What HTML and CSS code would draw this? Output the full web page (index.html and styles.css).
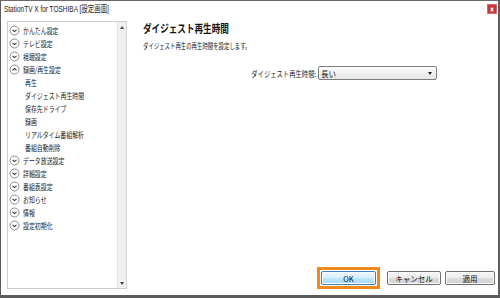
FILE: index.html
```html
<!DOCTYPE html>
<html lang="ja">
<head>
<meta charset="utf-8">
<link rel="stylesheet" href="styles.css">
</head>
<body>
<div class="window">
  <div class="titlebar">
    <span class="title">StationTV X for TOSHIBA [設定画面]</span>
    <span class="close"><svg width="9" height="9" viewBox="0 0 9 9"><path d="M2.5 2.5h4v1h-1v2h1v1h-4v-1h1v-2h-1z" fill="#fff"/></svg></span>
  </div>
  <div class="body">
    <div class="tree">
      <ul class="items">
        <li class="item"><svg class="ico" width="11" height="11" viewBox="0 0 11 11"><circle cx="5.5" cy="5.5" r="4.5" fill="#fff" stroke="#8a8a8a"/><path d="M3.5 4.8l2 1.8 2-1.8" fill="none" stroke="#333" stroke-width="1.1"/></svg><span class="t">かんたん設定</span></li>
        <li class="item"><svg class="ico" width="11" height="11" viewBox="0 0 11 11"><circle cx="5.5" cy="5.5" r="4.5" fill="#fff" stroke="#8a8a8a"/><path d="M3.5 4.8l2 1.8 2-1.8" fill="none" stroke="#333" stroke-width="1.1"/></svg><span class="t">テレビ設定</span></li>
        <li class="item"><svg class="ico" width="11" height="11" viewBox="0 0 11 11"><circle cx="5.5" cy="5.5" r="4.5" fill="#fff" stroke="#8a8a8a"/><path d="M3.5 4.8l2 1.8 2-1.8" fill="none" stroke="#333" stroke-width="1.1"/></svg><span class="t">視聴設定</span></li>
        <li class="item"><svg class="ico" width="11" height="11" viewBox="0 0 11 11"><circle cx="5.5" cy="5.5" r="4.5" fill="#fff" stroke="#8a8a8a"/><path d="M3.5 6.4l2-1.8 2 1.8" fill="none" stroke="#333" stroke-width="1.1"/></svg><span class="t">録画/再生設定</span></li>
        <li class="sub"><span class="t">再生</span></li>
        <li class="sub"><span class="t">ダイジェスト再生時間</span></li>
        <li class="sub"><span class="t">保存先ドライブ</span></li>
        <li class="sub"><span class="t">録画</span></li>
        <li class="sub"><span class="t">リアルタイム番組解析</span></li>
        <li class="sub"><span class="t">番組自動削除</span></li>
        <li class="item"><svg class="ico" width="11" height="11" viewBox="0 0 11 11"><circle cx="5.5" cy="5.5" r="4.5" fill="#fff" stroke="#8a8a8a"/><path d="M3.5 4.8l2 1.8 2-1.8" fill="none" stroke="#333" stroke-width="1.1"/></svg><span class="t">データ放送設定</span></li>
        <li class="item"><svg class="ico" width="11" height="11" viewBox="0 0 11 11"><circle cx="5.5" cy="5.5" r="4.5" fill="#fff" stroke="#8a8a8a"/><path d="M3.5 4.8l2 1.8 2-1.8" fill="none" stroke="#333" stroke-width="1.1"/></svg><span class="t">詳細設定</span></li>
        <li class="item"><svg class="ico" width="11" height="11" viewBox="0 0 11 11"><circle cx="5.5" cy="5.5" r="4.5" fill="#fff" stroke="#8a8a8a"/><path d="M3.5 4.8l2 1.8 2-1.8" fill="none" stroke="#333" stroke-width="1.1"/></svg><span class="t">番組表設定</span></li>
        <li class="item"><svg class="ico" width="11" height="11" viewBox="0 0 11 11"><circle cx="5.5" cy="5.5" r="4.5" fill="#fff" stroke="#8a8a8a"/><path d="M3.5 4.8l2 1.8 2-1.8" fill="none" stroke="#333" stroke-width="1.1"/></svg><span class="t">お知らせ</span></li>
        <li class="item"><svg class="ico" width="11" height="11" viewBox="0 0 11 11"><circle cx="5.5" cy="5.5" r="4.5" fill="#fff" stroke="#8a8a8a"/><path d="M3.5 4.8l2 1.8 2-1.8" fill="none" stroke="#333" stroke-width="1.1"/></svg><span class="t">情報</span></li>
        <li class="item"><svg class="ico" width="11" height="11" viewBox="0 0 11 11"><circle cx="5.5" cy="5.5" r="4.5" fill="#fff" stroke="#8a8a8a"/><path d="M3.5 4.8l2 1.8 2-1.8" fill="none" stroke="#333" stroke-width="1.1"/></svg><span class="t">設定初期化</span></li>
      </ul>
      <div class="scrollbar">
        <span class="arrow-up"></span>
        <span class="arrow-down"></span>
      </div>
    </div>
    <div class="main">
      <h1 class="heading"><span class="t">ダイジェスト再生時間</span></h1>
      <p class="desc"><span class="t">ダイジェスト再生の再生時間を設定します。</span></p>
      <div class="field">
        <span class="label">ダイジェスト再生時間:</span>
        <div class="select"><span>長い</span><span class="caret"></span></div>
      </div>
      <div class="buttons">
        <div class="focus"><div class="btn btn-ok">OK</div></div>
        <div class="btn btn-cancel">キャンセル</div>
        <div class="btn btn-apply">適用</div>
      </div>
    </div>
  </div>
</div>
</body>
</html>
```

FILE: styles.css
```css
* { box-sizing: border-box; }
html, body { margin: 0; padding: 0; }
body {
  font-family: "Noto Sans CJK JP", "Noto Sans", sans-serif;
  color: #111;
  background: #fff;
}
.t {
  display: inline-block;
  white-space: nowrap;
  transform-origin: left center;
}
.window {
  width: 500px;
  height: 298px;
  border-left: 1px solid #5c5c5c;
  border-top: 1px solid #6a6a6a;
  border-right: 2px solid #5c5c5c;
  border-bottom: 3px solid #5c5c5c;
  display: flex;
  flex-direction: column;
  background: #fff;
}
.titlebar {
  height: 19px;
  display: flex;
  align-items: flex-start;
  justify-content: space-between;
  padding: 1px 1px 0 3px;
}
.title {
  display: inline-block;
  white-space: nowrap;
  font-family: "Liberation Sans", "Noto Sans CJK JP", sans-serif;
  font-size: 9px;
  line-height: 14px;
  color: #222;
  transform: scaleX(0.72);
  transform-origin: left center;
}
.close {
  width: 10px;
  height: 10px;
  margin-top: 2px;
  background: #c9363a;
  border: 1px solid #d96a6d;
  display: flex;
  align-items: center;
  justify-content: center;
}
.close svg { display: block; }
.body {
  flex: 1;
  display: flex;
  padding: 1px 0 6px 6px;
  min-height: 0;
}
.tree {
  width: 120px;
  border: 1px solid #cdcdcd;
  border-right-color: #d6d6d6;
  display: flex;
  background: #fff;
}
.items {
  list-style: none;
  margin: 0;
  padding: 2px 0 0 0;
  flex: 1;
}
.item, .sub {
  height: 13px;
  font-size: 8px;
  line-height: 13px;
  display: flex;
  align-items: center;
  white-space: nowrap;
  color: #1a1a1a;
}
.item .t, .sub .t {
  transform: scaleX(0.74);
}
.item .ico {
  margin: 0 3px 0 1px;
  flex: none;
}
.sub {
  padding-left: 17px;
}
.scrollbar {
  width: 9px;
  background: #f0f0f0;
  border-left: 1px solid #e4e4e4;
  display: flex;
  flex-direction: column;
  justify-content: space-between;
  align-items: center;
  padding: 4px 0 3px;
}
.arrow-up {
  width: 0; height: 0;
  border-left: 2.5px solid transparent;
  border-right: 2.5px solid transparent;
  border-bottom: 3px solid #444;
}
.arrow-down {
  width: 0; height: 0;
  border-left: 2.5px solid transparent;
  border-right: 2.5px solid transparent;
  border-top: 3px solid #444;
}
.main {
  flex: 1;
  display: flex;
  flex-direction: column;
  padding: 0 0 0 16px;
}
.heading {
  margin: 0;
  font-size: 11px;
  line-height: 14px;
  font-weight: bold;
  color: #111;
}
.heading .t { transform: scaleX(0.78); }
.desc {
  margin: 5px 0 0;
  font-size: 7.5px;
  line-height: 12px;
  color: #1a1a1a;
}
.desc .t { transform: scaleX(0.72); }
.field {
  margin-top: 14px;
  display: flex;
  justify-content: flex-end;
  align-items: center;
  padding-right: 61px;
}
.label {
  display: inline-block;
  white-space: nowrap;
  font-size: 8px;
  margin-right: 2px;
  color: #1a1a1a;
  transform: scaleX(0.79);
  transform-origin: right center;
  margin-left: -30px;
}
.select {
  width: 119px;
  height: 14px;
  border: 1px solid #7d7d7d;
  border-radius: 2px;
  background: linear-gradient(#fdfdfd, #e6e6e6);
  display: flex;
  align-items: center;
  justify-content: space-between;
  padding: 0 4px 0 2px;
  font-size: 7.5px;
  color: #111;
}
.caret {
  width: 0; height: 0;
  border-left: 2.5px solid transparent;
  border-right: 2.5px solid transparent;
  border-top: 3px solid #222;
}
.buttons {
  margin-top: auto;
  display: flex;
  align-items: center;
  padding-left: 174px;
}
.focus {
  border: 3px solid #f08a1c;
  padding: 1px 1px;
  margin-right: 7px;
}
.btn {
  height: 14px;
  border: 1px solid #707070;
  border-radius: 2px;
  background: linear-gradient(#f6f6f6 0%, #ececec 50%, #dcdcdc 51%, #d2d2d2 100%);
  box-shadow: inset 0 0 0 1px #fbfbfb;
  font-size: 7.5px;
  display: flex;
  align-items: center;
  justify-content: center;
  color: #111;
}
.btn-ok {
  width: 55px;
  border-color: #3c7fb1;
  background: linear-gradient(#eaf6fd 0%, #d9f0fc 50%, #bee6fd 51%, #a7d9f5 100%);
}
.btn-cancel {
  width: 54px;
  margin-right: 4px;
}
.btn-apply {
  width: 50px;
}
```
